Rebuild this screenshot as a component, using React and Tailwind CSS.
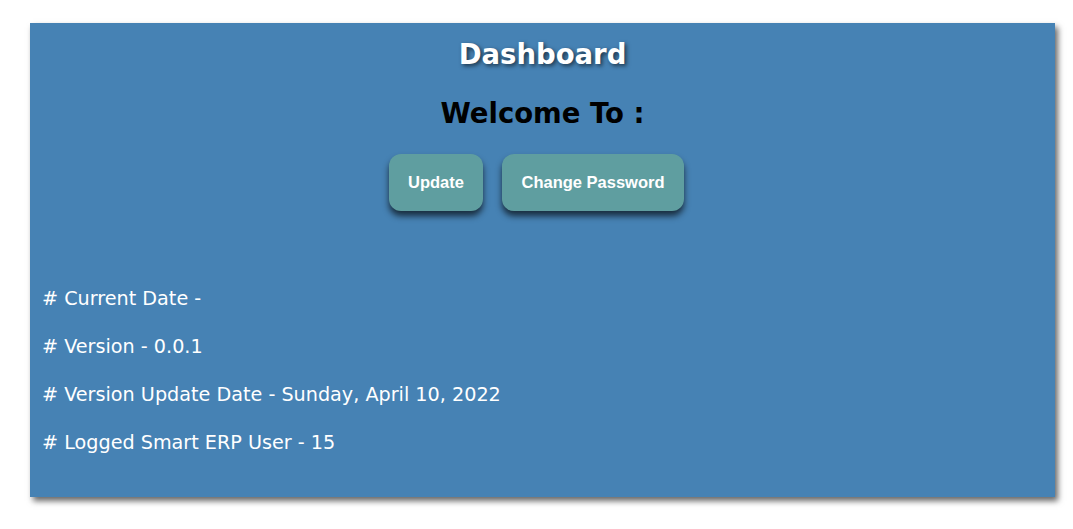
export default function App() {
  const info = [
    "# Current Date -",
    "# Version - 0.0.1",
    "# Version Update Date - Sunday, April 10, 2022",
    "# Logged Smart ERP User - 15",
  ];

  return (
    <div className="w-[1073px] h-[529px] bg-white pt-[23px] pl-[30px]">
      <div className="w-[1025px] h-[474px] bg-[#4682b4] shadow-[3px_4px_6px_rgba(0,0,0,0.6)] font-['DejaVu_Sans',sans-serif]">
        <h1 className="pt-[13px] text-center text-[27.5px] leading-[36px] font-bold text-white [text-shadow:2px_2px_4px_rgba(0,0,0,0.6)]">
          Dashboard
        </h1>
        <h2 className="mt-[23px] text-center text-[27.5px] leading-[36px] font-bold text-black">
          Welcome To :
        </h2>
        <div className="mt-[23px] flex justify-center gap-[19px] pr-[12px] font-['Liberation_Sans',Arial,sans-serif]">
          <button className="h-[57px] w-[94px] rounded-[12px] bg-[#5f9ea0] text-[16.5px] font-bold text-white shadow-[0_5px_6px_rgba(0,0,0,0.65)]">
            Update
          </button>
          <button className="h-[57px] w-[182px] rounded-[12px] bg-[#5f9ea0] text-[16.5px] font-bold text-white shadow-[0_5px_6px_rgba(0,0,0,0.65)]">
            Change Password
          </button>
        </div>
        <div className="mt-[76px] pl-[12px] flex flex-col gap-[24px] text-[19.2px] leading-[24px] text-white">
          {info.map((line) => (
            <p key={line}>{line}</p>
          ))}
        </div>
      </div>
    </div>
  );
}
